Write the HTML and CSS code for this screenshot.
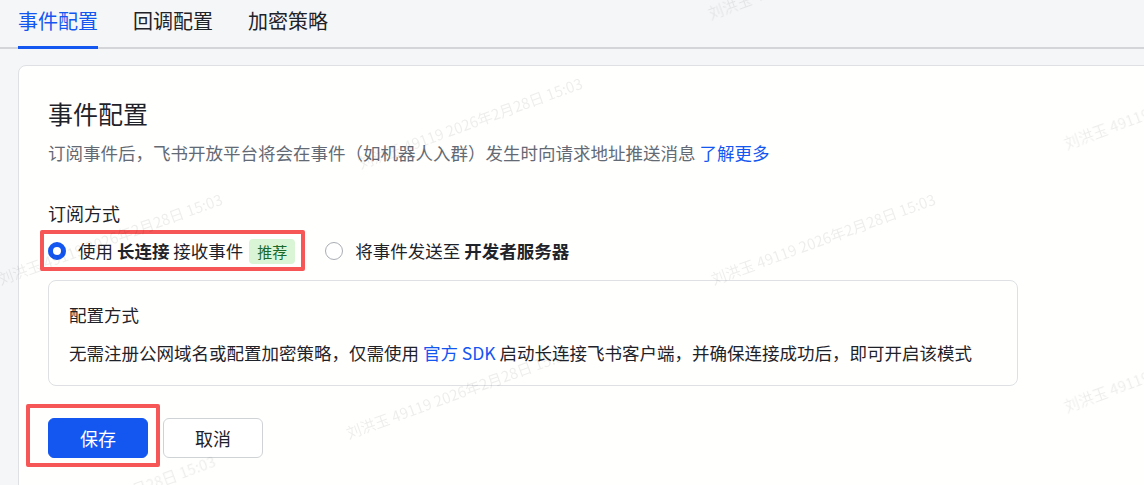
FILE: index.html
```html
<!DOCTYPE html>
<html lang="zh-CN">

<head>
    <meta charset="utf-8">
    <meta name="viewport" content="width=device-width, initial-scale=1.0">
    <title>事件配置</title>

    <link rel="stylesheet" href="styles.css">

</head>

<body>

    <nav class="tabs">
        <a class="tab valgt" href="#">事件配置</a>
        <a class="tab" href="#">回调配置</a>
        <a class="tab" href="#">加密策略</a>
    </nav>

    <section class="card">
        <h2 class="card_title">事件配置</h2>
        <p class="desc">订阅事件后，飞书开放平台将会在事件（如机器人入群）发生时向请求地址推送消息 <a href="#">了解更多</a></p>

        <div class="field_label">订阅方式</div>

        <div class="radio_group">
            <label class="radio checked marked">
                <span class="dot"></span>
                <span>使用 <b>长连接</b> 接收事件</span>
                <span class="tag">推荐</span>
            </label>
            <label class="radio">
                <span class="dot"></span>
                <span>将事件发送至 <b>开发者服务器</b></span>
            </label>
        </div>

        <div class="info_box">
            <div class="info_title">配置方式</div>
            <p>无需注册公网域名或配置加密策略，仅需使用 <a href="#">官方 SDK</a> 启动长连接飞书客户端，并确保连接成功后，即可开启该模式</p>
        </div>

        <div class="actions">
            <span class="save_wrap">
                <button class="btn primary">保存</button>
            </span>
            <button class="btn">取消</button>
        </div>
    </section>

    <!-- vandmærker -->
    <div class="watermarks">
        <span style="left: 712px; top: 2px;">刘洪玉 49119 2026年2月28日 15:03</span>
        <span style="left: 362px; top: 152px;">刘洪玉 49119 2026年2月28日 15:03</span>
        <span style="left: 1068px; top: 132px;">刘洪玉 49119 2026年2月28日 15:03</span>
        <span style="left: 2px; top: 268px;">刘洪玉 49119 2026年2月28日 15:03</span>
        <span style="left: 715px; top: 268px;">刘洪玉 49119 2026年2月28日 15:03</span>
        <span style="left: 350px; top: 422px;">刘洪玉 49119 2026年2月28日 15:03</span>
        <span style="left: 1068px; top: 395px;">刘洪玉 49119 2026年2月28日 15:03</span>
        <span style="left: -5px; top: 530px;">刘洪玉 49119 2026年2月28日 15:03</span>
    </div>

</body></html>
```

FILE: styles.css
```css
html {
    background-color: #f5f6f7;
}

body {
    margin: 0;
    font-family: "Noto Sans CJK SC", "Noto Sans", sans-serif;
    color: #1f2329;
    overflow: hidden;
}

a {
    text-decoration: none;
    color: #1456f0;
}

.tabs {
    display: flex;
    gap: 35px;
    padding: 0 18px;
    border-bottom: 2px solid #d3d5d8;
}

.tab {
    font-size: 20px;
    line-height: 28px;
    padding: 7px 0 11px;
    color: #1f2329;
    border-bottom: 3px solid transparent;
    margin-bottom: -2px;
}

.tab.valgt {
    color: #1456f0;
    border-bottom-color: #1456f0;
}

.card {
    margin: 16px -30px 0 18px;
    padding: 30px 29px 40px;
    background-color: #fffffe;
    border: 1px solid #dee0e3;
    border-radius: 8px;
    min-height: 400px;
}

.card_title {
    margin: 0;
    font-size: 25px;
    line-height: 34px;
    font-weight: 400;
}

.desc {
    margin: 10px 0 0;
    font-size: 17.5px;
    line-height: 26px;
    color: #646a73;
}

.field_label {
    margin-top: 34px;
    font-size: 18px;
    line-height: 26px;
}

.radio_group {
    margin-top: 12px;
    display: flex;
    gap: 30px;
    font-size: 17.5px;
    line-height: 26px;
}

.radio {
    position: relative;
    display: flex;
    align-items: center;
    gap: 12px;
}

.radio b {
    font-weight: 700;
}

.dot {
    width: 18px;
    height: 18px;
    box-sizing: border-box;
    border: 1px solid #a9adb3;
    border-radius: 50%;
    background: white;
}

.checked .dot {
    border: 5px solid #1456f0;
}

.tag {
    margin-left: -6px;
    padding: 0 8px;
    font-size: 15px;
    line-height: 25px;
    border-radius: 4px;
    background-color: #d9f5d6;
    color: #1b6a2c;
}

/* røde markeringer */
.marked::after,
.save_wrap::after {
    content: "";
    position: absolute;
    border: 4px solid #f75656;
    border-radius: 2px;
}

.marked::after {
    top: -8px;
    left: -8px;
    right: -10px;
    bottom: -7px;
}

.info_box {
    margin-top: 16px;
    width: 970px;
    padding: 21px 20px 19px;
    box-sizing: border-box;
    border: 1px solid #dee0e3;
    border-radius: 8px;
    font-size: 17.5px;
    line-height: 26px;
}

.info_box p {
    margin: 12px 0 0;
    white-space: nowrap;
}

.actions {
    margin-top: 32px;
    display: flex;
    gap: 15px;
}

.save_wrap {
    position: relative;
    display: flex;
}

.save_wrap::after {
    top: -14px;
    left: -22px;
    right: -12px;
    bottom: -9px;
}

.btn {
    width: 100px;
    height: 40px;
    font-family: inherit;
    font-size: 18px;
    border-radius: 6px;
    border: 1px solid #d0d3d6;
    background: white;
    color: #1f2329;
}

.btn.primary {
    background-color: #1456f0;
    border-color: #1456f0;
    color: white;
}

.watermarks {
    position: fixed;
    top: 0;
    left: 0;
    right: 0;
    bottom: 0;
    pointer-events: none;
}

.watermarks span {
    position: absolute;
    white-space: nowrap;
    font-size: 15px;
    color: rgba(0, 0, 0, 0.07);
    transform: rotate(-20deg);
    transform-origin: 0 100%;
}
```
